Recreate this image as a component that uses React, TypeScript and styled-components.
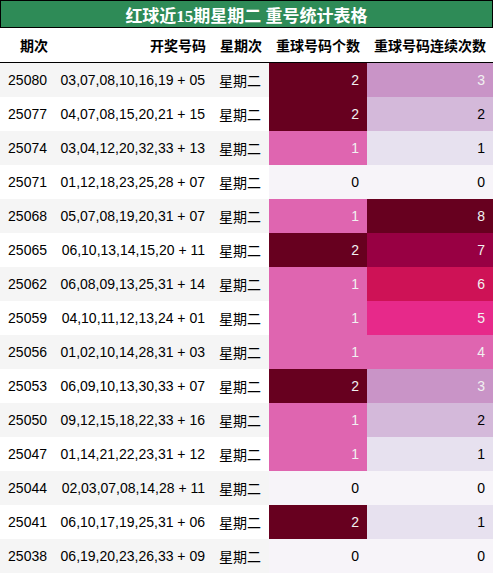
import React from "react";
import styled, { createGlobalStyle } from "styled-components";

const Global = createGlobalStyle`
  html, body { margin: 0; padding: 0; background: #ffffff; }
  body { font-family: "Liberation Sans", "Noto Sans CJK SC", sans-serif; }
`;

const Page = styled.div`
  width: 493px;
  display: flex;
  flex-direction: column;
`;

const TitleBar = styled.div`
  height: 26px;
  background: #2e8b57;
  border: 1px solid #000000;
  display: flex;
  align-items: center;
  justify-content: center;
  color: #ffffff;
  font-family: "Liberation Serif", "Noto Sans CJK SC", serif;
  font-weight: 700;
  font-size: 17px;
`;

const Table = styled.table`
  border-collapse: collapse;
  table-layout: fixed;
  width: 493px;
  font-size: 14px;
  color: #000000;
`;

const HeadCell = styled.th`
  height: 34px;
  padding: 0 7px 0 0;
  text-align: right;
  font-weight: 700;
  font-family: "Noto Sans CJK SC", sans-serif;
  font-size: 14px;
  background: #ffffff;
  border-bottom: 1px solid #000000;
  white-space: nowrap;
`;

const Row = styled.tr`
  &:nth-child(odd) { background: #f5f5f5; }
  &:nth-child(even) { background: #ffffff; }
`;

const Cell = styled.td<{ $bg?: string; $fg?: string }>`
  height: 34px;
  padding: 0 8px 0 0;
  text-align: right;
  white-space: nowrap;
  font-family: "Liberation Sans", "Noto Sans CJK SC", sans-serif;
  background: ${(p) => p.$bg ?? "transparent"};
  color: ${(p) => p.$fg ?? "#000000"};
`;

const PURD = ["#f7f4f9", "#e7e1ef", "#d4b9da", "#c994c7", "#df65b0", "#e7298a", "#ce1256", "#980043", "#67001f"];

const countColor = (v: number) => (v === 0 ? PURD[0] : v === 1 ? PURD[4] : PURD[8]);
const countText = (v: number) => (v === 0 ? "#000000" : "#f1f1f1");
const consColor = (v: number) => PURD[v];
const consText = (v: number) => (v >= 3 ? "#f1f1f1" : "#000000");

const rows: [string, string, number, number][] = [
  ["25080", "03,07,08,10,16,19 + 05", 2, 3],
  ["25077", "04,07,08,15,20,21 + 15", 2, 2],
  ["25074", "03,04,12,20,32,33 + 13", 1, 1],
  ["25071", "01,12,18,23,25,28 + 07", 0, 0],
  ["25068", "05,07,08,19,20,31 + 07", 1, 8],
  ["25065", "06,10,13,14,15,20 + 11", 2, 7],
  ["25062", "06,08,09,13,25,31 + 14", 1, 6],
  ["25059", "04,10,11,12,13,24 + 01", 1, 5],
  ["25056", "01,02,10,14,28,31 + 03", 1, 4],
  ["25053", "06,09,10,13,30,33 + 07", 2, 3],
  ["25050", "09,12,15,18,22,33 + 16", 1, 2],
  ["25047", "01,14,21,22,23,31 + 12", 1, 1],
  ["25044", "02,03,07,08,14,28 + 11", 0, 0],
  ["25041", "06,10,17,19,25,31 + 06", 2, 1],
  ["25038", "06,19,20,23,26,33 + 09", 0, 0],
];

export default function App() {
  return (
    <Page>
      <Global />
      <TitleBar>红球近15期星期二 重号统计表格</TitleBar>
      <Table>
        <colgroup>
          <col style={{ width: 55 }} />
          <col style={{ width: 158 }} />
          <col style={{ width: 56 }} />
          <col style={{ width: 98 }} />
          <col style={{ width: 126 }} />
        </colgroup>
        <thead>
          <tr>
            <HeadCell>期次</HeadCell>
            <HeadCell>开奖号码</HeadCell>
            <HeadCell>星期次</HeadCell>
            <HeadCell>重球号码个数</HeadCell>
            <HeadCell>重球号码连续次数</HeadCell>
          </tr>
        </thead>
        <tbody>
          {rows.map(([id, nums, c, s]) => (
            <Row key={id}>
              <Cell>{id}</Cell>
              <Cell>{nums}</Cell>
              <Cell>星期二</Cell>
              <Cell $bg={countColor(c)} $fg={countText(c)}>{c}</Cell>
              <Cell $bg={consColor(s)} $fg={consText(s)}>{s}</Cell>
            </Row>
          ))}
        </tbody>
      </Table>
    </Page>
  );
}
